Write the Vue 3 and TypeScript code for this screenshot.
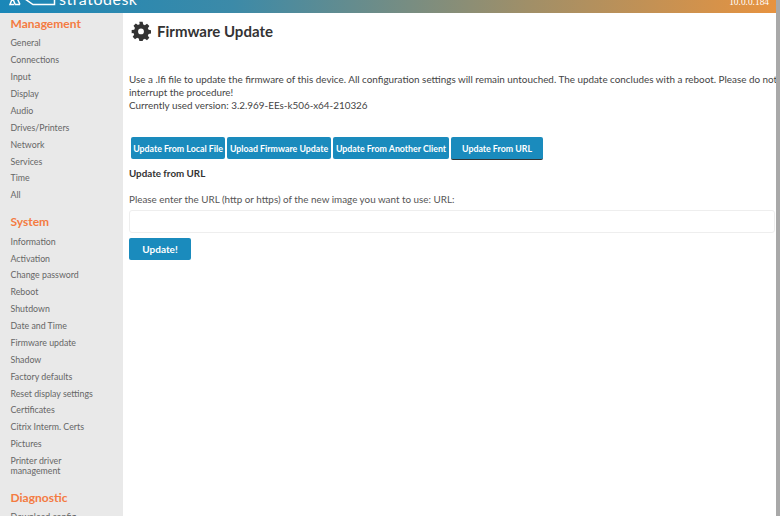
<script setup lang="ts">
const groups: { title: string; items: string[] }[] = [
  { title: 'Management', items: ['General', 'Connections', 'Input', 'Display', 'Audio', 'Drives/Printers', 'Network', 'Services', 'Time', 'All'] },
  { title: 'System', items: ['Information', 'Activation', 'Change password', 'Reboot', 'Shutdown', 'Date and Time', 'Firmware update', 'Shadow', 'Factory defaults', 'Reset display settings', 'Certificates', 'Citrix Interm. Certs', 'Pictures', 'Printer driver management'] },
  { title: 'Diagnostic', items: ['Download config'] },
]
const tabs = ['Update From Local File', 'Upload Firmware Update', 'Update From Another Client', 'Update From URL']
</script>

<template>
  <div class="page">
    <div class="frame">
      <header class="top">
        <div class="brand">
          <svg class="logo" width="59" height="13" viewBox="0 0 59 13" fill="none" stroke="#fff" stroke-width="1.5">
            <path d="M12.500 -2 L10 4.500 H14.500 M12.500 -2 L15 4 M17 -2 L20 4.500 M15 4.500 H20" />
            <path d="M25 -1 L33 4.500 H54.500 V-1" />
          </svg>
          <span class="name">stratodesk</span>
        </div>
        <span class="ip">10.0.0.184</span>
      </header>
      <div class="body">
        <nav class="side">
          <section v-for="g in groups" :key="g.title" class="group">
            <h3>{{ g.title }}</h3>
            <a v-for="i in g.items" :key="i">{{ i }}</a>
          </section>
        </nav>
        <main class="main">
          <h1>
            <svg width="20" height="20" viewBox="0 0 24 24" fill="#333">
              <path fill-rule="evenodd" d="M10 1h4l.6 3.100c.7.2 1.400.5 2 .9l2.600-1.800 2.800 2.800-1.800 2.600c.4.6.7 1.300.9 2l3.100.4v4l-3.100.6c-.2.7-.5 1.400-.9 2l1.800 2.600-2.800 2.800-2.600-1.800c-.6.4-1.300.7-2 .9L14 24h-4l-.6-3.100c-.7-.2-1.400-.5-2-.9l-2.600 1.800-2.800-2.800 1.800-2.600c-.4-.6-.7-1.300-.9-2L.8 14.800v-4l3.100-.4c.2-.7.5-1.400.9-2L3 5.800 5.800 3l2.600 1.800c.6-.4 1.300-.7 2-.9L10 1zm2 8a3.500 3.500 0 1 0 0 7 3.500 3.500 0 0 0 0-7z" />
            </svg>
            Firmware Update
          </h1>
          <p class="intro">Use a .lfi file to update the firmware of this device. All configuration settings will remain untouched. The update concludes with a reboot. Please do not interrupt the procedure!<br />Currently used version: 3.2.969-EEs-k506-x64-210326</p>
          <div class="tabs">
            <button v-for="(t, n) in tabs" :key="t" :class="{ active: n === 3 }">{{ t }}</button>
          </div>
          <h2>Update from URL</h2>
          <label for="url">Please enter the URL (http or https) of the new image you want to use: URL:</label>
          <input id="url" type="text" />
          <button class="go">Update!</button>
        </main>
      </div>
    </div>
    <div class="scroll"></div>
  </div>
</template>

<style>
html, body { margin: 0; background: #fff; overflow: hidden; }
</style>

<style scoped>
.page { width: 780px; height: 516px; overflow: hidden; display: flex; font-family: Lato, sans-serif; }
.frame { flex: 1; min-width: 0; display: flex; flex-direction: column; }
.scroll { width: 4px; flex: none; background: #a9a9a9; }
.top { height: 13px; flex: none; display: flex; align-items: flex-end; justify-content: space-between; overflow: hidden; background: linear-gradient(90deg, #1a87b8 0%, #3c8aa8 30%, #a08f68 68%, #e79340 100%); color: #fff; padding-right: 7px; }
.brand { display: flex; align-items: flex-end; height: 13px; }
.logo { flex: none; }
.name { font-size: 16px; line-height: 20px; margin-bottom: 4.500px; letter-spacing: 0.5px; }
.ip { font-size: 9.400px; line-height: 12px; margin-bottom: 5.500px; font-family: "Liberation Serif", serif; }
.body { flex: 1; display: flex; min-height: 0; }
.side { width: 123px; flex: none; background: #e9e9e9; padding: 3px 0 0 10.500px; box-sizing: border-box; overflow: hidden; }
.group { margin-bottom: 10.500px; }
.group h3 { margin: 0 0 3px; font-size: 12px; line-height: 16px; font-weight: 700; color: #f47b42; }
.group a { display: block; font-size: 8.800px; line-height: 10px; padding: 3.450px 0; color: #666; width: 96px; }
.main { flex: 1; padding: 0 1px 0 6px; min-width: 0; }
h1 { margin: 6px 0 0; display: flex; align-items: center; gap: 6px; font-size: 15px; line-height: 24px; font-weight: 700; color: #333; padding-left: 2px; }
.intro { margin: 30px -3px 0 0; font-size: 9.900px; line-height: 13px; color: #444; }
.tabs { display: flex; gap: 2px; margin: 25px 0 0 2px; align-items: flex-start; }
button { font-family: Lato, sans-serif; color: #fff; background: #1a8bbd; border: 0; border-radius: 2px; font-weight: 700; cursor: pointer; padding: 0; }
.tabs button { height: 22px; font-size: 8.800px; padding: 0; }
.tabs button:nth-child(1) { width: 94px; }
.tabs button:nth-child(2) { width: 104px; }
.tabs button:nth-child(3) { width: 116px; }
.tabs button.active { width: 92px; height: 23px; border-bottom: 1px solid #333; }
h2 { margin: 6.500px 0 0; font-size: 9.800px; line-height: 13px; font-weight: 700; color: #333; }
label { display: block; margin-top: 13px; font-size: 9.850px; line-height: 13px; color: #555; }
input { display: block; width: 100%; box-sizing: border-box; height: 23px; margin-top: 4.500px; border: 1px solid #eee; border-radius: 3px; background: #fff; }
.go { display: block; margin-top: 5px; width: 62px; height: 22px; font-size: 10px; }
</style>
